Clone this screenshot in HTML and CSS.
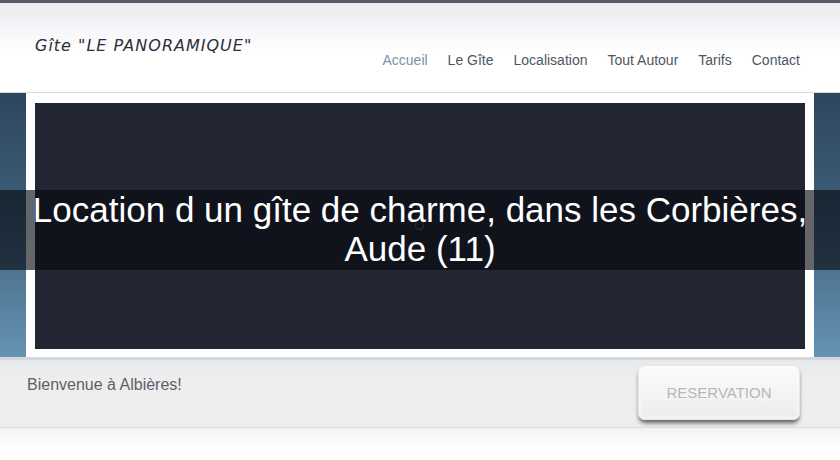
FILE: index.html
```html
<!DOCTYPE html>
<html lang="fr">
<head>
  <meta charset="UTF-8">
  <meta name="viewport" content="width=device-width, initial-scale=1.0">
  <title>Gîte "LE PANORAMIQUE"</title>
  <link rel="stylesheet" href="styles.css">
</head>
<body>
  <div class="topbar"></div>
  <header class="header">
    <div class="logo">Gîte "LE PANORAMIQUE"</div>
    <nav class="nav">
      <a class="active" href="#">Accueil</a>
      <a href="#">Le Gîte</a>
      <a href="#">Localisation</a>
      <a href="#">Tout Autour</a>
      <a href="#">Tarifs</a>
      <a href="#">Contact</a>
    </nav>
  </header>

  <section class="stage">
    <div class="frame">
      <div class="slide">
        <span class="spinner"></span>
      </div>
    </div>
    <h1 class="caption">Location d un gîte de charme, dans les Corbières, Aude (11)</h1>
  </section>

  <div class="welcome">
    <p>Bienvenue à Albières!</p>
    <a class="reserve" href="#">RESERVATION</a>
  </div>
  <div class="bottom"></div>
</body>
</html>
```

FILE: styles.css
```css
* {
  box-sizing: border-box;
  margin: 0;
  padding: 0;
}

body {
  font-family: 'DejaVu Sans', sans-serif;
  background-color: #ffffff;
  width: 840px;
  height: 460px;
  overflow: hidden;
}

.topbar {
  height: 3px;
  background-color: #5b5967;
}

.header {
  height: 90px;
  display: flex;
  justify-content: space-between;
  align-items: flex-start;
  padding: 0 40px 0 35px;
  background: linear-gradient(to bottom, #ebebf0 0%, #f8f8fa 35%, #ffffff 60%);
  border-bottom: 1px solid #d9d9dc;
}

.logo {
  margin-top: 33px;
  font-family: 'DejaVu Sans', sans-serif;
  font-style: italic;
  font-weight: 200;
  font-size: 16px;
  letter-spacing: 1px;
  color: #2b2f3a;
}

.nav {
  display: flex;
  gap: 20px;
  margin-top: 49px;
}

.nav a {
  font-family: 'Liberation Sans', sans-serif;
  font-size: 14px;
  color: #4f5560;
  text-decoration: none;
}

.nav a.active {
  color: #7d92aa;
}

.stage {
  position: relative;
  padding: 0 26px;
  background: linear-gradient(to bottom, #2d465d 0%, #3d5c77 40%, #6593b4 100%);
}

.frame {
  background-color: #ffffff;
  padding: 10px 9px 8px 9px;
}

.slide {
  position: relative;
  height: 246px;
  background-color: #222733;
}

.spinner {
  position: absolute;
  left: 380px;
  top: 118px;
  width: 9px;
  height: 9px;
  border: 1px solid #6b6f78;
  border-top-color: transparent;
  border-radius: 50%;
}

.caption {
  position: absolute;
  left: 0;
  right: 0;
  top: 97px;
  height: 80px;
  padding: 0 30px;
  background-color: rgba(5, 8, 14, 0.62);
  font-family: 'Liberation Sans', sans-serif;
  font-weight: normal;
  font-size: 35px;
  line-height: 39px;
  text-align: center;
  color: #ffffff;
}

.welcome {
  height: 71px;
  display: flex;
  justify-content: space-between;
  align-items: flex-start;
  padding: 0 40px 0 27px;
  border-top: 3px solid #d6d9dc;
  border-bottom: 1px solid #dcdcdc;
  background: linear-gradient(to bottom, #e6e9ec 0%, #eeeeee 30%, #ededed 100%);
}

.welcome p {
  margin-top: 16px;
  font-family: 'Liberation Sans', sans-serif;
  font-size: 16px;
  color: #5e6166;
}

.reserve {
  margin-top: 5px;
  width: 162px;
  height: 55px;
  display: flex;
  align-items: center;
  justify-content: center;
  border-radius: 7px;
  background: linear-gradient(to bottom, #fbfbfb 0%, #f3f3f3 60%, #ececec 100%);
  border: 1px solid #e6e6e6;
  box-shadow: 0 4px 4px -1px rgba(0, 0, 0, 0.6), inset 0 0 4px #ffffff;
  font-family: 'Liberation Sans', sans-serif;
  font-size: 15px;
  color: #b5b7ba;
  text-decoration: none;
}

.bottom {
  height: 40px;
  background: linear-gradient(to bottom, #f3f3f3 0%, #ffffff 60%);
}
```
